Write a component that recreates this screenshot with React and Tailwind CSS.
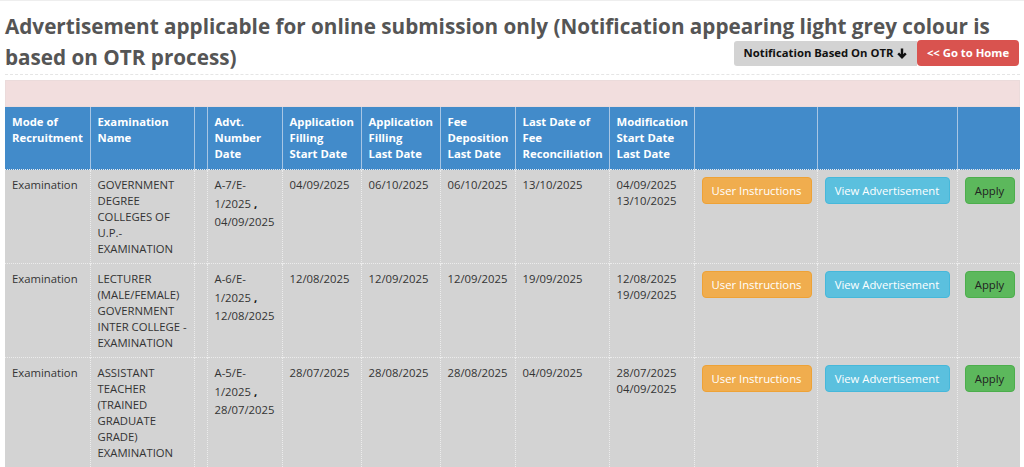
import React from "react";

const rows = [
  {
    mode: "Examination",
    name: ["GOVERNMENT", "DEGREE", "COLLEGES OF", "U.P.-", "EXAMINATION"],
    advt: ["A-7/E-", "1/2025", "04/09/2025"],
    start: "04/09/2025",
    last: "06/10/2025",
    fee: "06/10/2025",
    recon: "13/10/2025",
    mod: ["04/09/2025", "13/10/2025"],
  },
  {
    mode: "Examination",
    name: ["LECTURER", "(MALE/FEMALE)", "GOVERNMENT", "INTER COLLEGE -", "EXAMINATION"],
    advt: ["A-6/E-", "1/2025", "12/08/2025"],
    start: "12/08/2025",
    last: "12/09/2025",
    fee: "12/09/2025",
    recon: "19/09/2025",
    mod: ["12/08/2025", "19/09/2025"],
  },
  {
    mode: "Examination",
    name: ["ASSISTANT", "TEACHER", "(TRAINED", "GRADUATE", "GRADE)", "EXAMINATION"],
    advt: ["A-5/E-", "1/2025", "28/07/2025"],
    start: "28/07/2025",
    last: "28/08/2025",
    fee: "28/08/2025",
    recon: "04/09/2025",
    mod: ["28/07/2025", "04/09/2025"],
  },
];

const headers = [
  ["Mode of", "Recruitment"],
  ["Examination", "Name"],
  [],
  ["Advt.", "Number", "Date"],
  ["Application", "Filling", "Start Date"],
  ["Application", "Filling", "Last Date"],
  ["Fee", "Deposition", "Last Date"],
  ["Last Date of", "Fee", "Reconciliation"],
  ["Modification", "Start Date", "Last Date"],
  [],
  [],
  [],
];

const th =
  "align-top text-left px-[7px] py-[7px] border-l border-[#a8c6e4] first:border-l-0 font-bold";
const td =
  "align-top text-left px-[7px] pt-[7px] pb-[6px] border-l border-t border-dotted border-[#ececec] first:border-l-0";

function Lines({ items }) {
  return items.map((t, i) => (
    <div key={i} className="whitespace-nowrap">
      {t}
    </div>
  ));
}

export default function App() {
  return (
    <div
      className="w-[1024px] h-[467px] overflow-hidden bg-white"
      style={{ fontFamily: '"Open Sans", "Liberation Sans", sans-serif' }}
    >
      <div className="border-t border-[#eeeeee] pl-[5px] pr-[4px]">
        <div className="border-b border-dashed border-[#e5e5e5] pb-[1px]">
          <div className="pt-[10px] text-[20.7px] leading-[31px] font-bold text-[#555555] whitespace-nowrap">
            Advertisement applicable for online submission only (Notification appearing light grey colour is
          </div>
          <div className="flex items-start justify-between">
            <div className="text-[20.7px] leading-[31px] font-bold text-[#555555]">
              based on OTR process)
            </div>
            <div className="flex items-center -mt-[2px] pr-[1px]">
              <span className="w-[183px] h-[25px] flex items-center justify-center gap-[4px] bg-[#d3d3d3] text-[#111] text-[11.3px] font-bold rounded-l-[3px]">
                Notification Based On OTR
                <svg width="10" height="11" viewBox="0 0 10 11" fill="none">
                  <path d="M5 0.5v8.5M1.2 5.3 5 9.2l3.8-3.9" stroke="#111" strokeWidth="2.4" />
                </svg>
              </span>
              <span className="w-[102px] h-[26px] flex items-center justify-center bg-[#d9534f] text-white text-[11.3px] font-bold rounded-[4px]">
                {"<< Go to Home"}
              </span>
            </div>
          </div>
        </div>
        <div className="mt-[5px] h-[27px] bg-[#f2dede] border border-[#ebdbdb]" />
        <table className="w-[1015px] table-fixed border-collapse text-[11.3px] leading-[16px]">
          <colgroup>
            <col className="w-[85px]" />
            <col className="w-[104px]" />
            <col className="w-[13px]" />
            <col className="w-[75px]" />
            <col className="w-[79px]" />
            <col className="w-[79px]" />
            <col className="w-[75px]" />
            <col className="w-[94px]" />
            <col className="w-[85px]" />
            <col className="w-[123px]" />
            <col className="w-[140px]" />
            <col className="w-[63px]" />
          </colgroup>
          <thead>
            <tr className="bg-[#428bca] text-white h-[62px]">
              {headers.map((h, i) => (
                <th key={i} className={th}>
                  <Lines items={h} />
                </th>
              ))}
            </tr>
          </thead>
          <tbody className="bg-[#d3d3d3] text-[#333333]">
            {rows.map((r, i) => (
              <tr key={i}>
                <td className={td}>{r.mode}</td>
                <td className={td}>
                  <Lines items={r.name} />
                </td>
                <td className={td}></td>
                <td className={td}>
                  <div>{r.advt[0]}</div>
                  <div className="leading-[21px]">
                    {r.advt[1]} <b className="text-[#111]">,</b>
                  </div>
                  <div>{r.advt[2]}</div>
                </td>
                <td className={td}>{r.start}</td>
                <td className={td}>{r.last}</td>
                <td className={td}>{r.fee}</td>
                <td className={td}>{r.recon}</td>
                <td className={td}>
                  <Lines items={r.mod} />
                </td>
                <td className={td + " px-[6px]"}>
                  <span className="inline-flex items-center justify-center w-[110px] h-[27px] rounded-[4px] bg-[#f0ad4e] border border-[#eea236] text-white">
                    User Instructions
                  </span>
                </td>
                <td className={td}>
                  <span className="inline-flex items-center justify-center w-[125px] h-[27px] rounded-[4px] bg-[#5bc0de] border border-[#46b8da] text-white">
                    View Advertisement
                  </span>
                </td>
                <td className={td + " px-[6px]"}>
                  <span className="inline-flex items-center justify-center w-[50px] h-[27px] rounded-[4px] bg-[#5cb85c] border border-[#4cae4c] text-[#222]">
                    Apply
                  </span>
                </td>
              </tr>
            ))}
          </tbody>
        </table>
      </div>
    </div>
  );
}
